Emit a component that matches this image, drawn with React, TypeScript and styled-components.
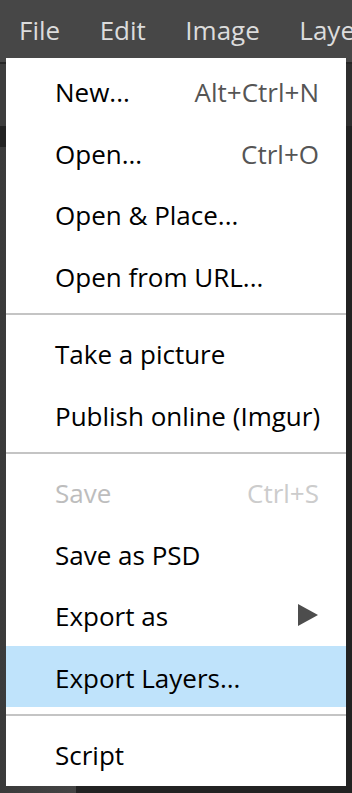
import React from "react";
import styled, { createGlobalStyle } from "styled-components";

const GlobalStyle = createGlobalStyle`
  html, body {
    margin: 0;
    padding: 0;
    background: #222222;
    overflow: hidden;
  }
  body {
    font-family: "Open Sans", "Liberation Sans", sans-serif;
  }
`;

const Screen = styled.div`
  position: relative;
  width: 352px;
  height: 793px;
  display: flex;
  flex-direction: column;
  background: #222222;
  overflow: hidden;
`;

const MenuBar = styled.div`
  height: 62px;
  display: flex;
  align-items: flex-start;
  gap: 39.5px;
  padding-left: 19px;
  background: #474747;
  flex-shrink: 0;
  overflow: hidden;
`;

const MenuBarItem = styled.div`
  font-size: 26px;
  line-height: 60px;
  color: #dcdcdc;
  white-space: nowrap;
`;

const ToolBar = styled.div`
  height: 62px;
  display: flex;
  justify-content: flex-end;
  align-items: center;
  border-top: 2px solid #262626;
  background: #3d3d3d;
  flex-shrink: 0;
`;

const ToolOptions = styled.div`
  width: 12px;
  height: 100%;
  background: #2e2e2e;
`;

const Workspace = styled.div`
  flex: 1;
  display: flex;
`;

const SidePanel = styled.div`
  width: 76px;
  margin-top: 21px;
  background: linear-gradient(90deg, #3a3a3a, #444444);
`;

const Canvas = styled.div`
  flex: 1;
  background: #222222;
`;

const Dropdown = styled.div`
  position: absolute;
  top: 58px;
  left: 6px;
  width: 340px;
  padding: 2px 0 1px;
  background: #ffffff;
  display: flex;
  flex-direction: column;
`;

const Item = styled.div<{ $active?: boolean; $disabled?: boolean }>`
  height: 61.5px;
  box-sizing: border-box;
  padding: 3px 27px 0 49px;
  display: flex;
  align-items: flex-start;
  justify-content: space-between;
  font-size: 26px;
  line-height: 58.5px;
  white-space: nowrap;
  color: ${({ $disabled }) => ($disabled ? "#bdbdbd" : "#000000")};
  background: ${({ $active }) => ($active ? "#bfe3fb" : "transparent")};
`;

const Shortcut = styled.span<{ $disabled?: boolean }>`
  color: ${({ $disabled }) => ($disabled ? "#cccccc" : "#555555")};
`;

const Arrow = styled.svg`
  align-self: center;
  margin-top: -3px;
  margin-right: 1px;
`;

const Separator = styled.div`
  height: 2px;
  margin: 7px 0;
  background: #c4c4c4;
`;

type Entry =
  | { label: string; shortcut?: string; submenu?: boolean; disabled?: boolean; active?: boolean }
  | "sep";

const entries: Entry[] = [
  { label: "New...", shortcut: "Alt+Ctrl+N" },
  { label: "Open...", shortcut: "Ctrl+O" },
  { label: "Open & Place..." },
  { label: "Open from URL..." },
  "sep",
  { label: "Take a picture" },
  { label: "Publish online (Imgur)" },
  "sep",
  { label: "Save", shortcut: "Ctrl+S", disabled: true },
  { label: "Save as PSD" },
  { label: "Export as", submenu: true },
  { label: "Export Layers...", active: true },
  "sep",
  { label: "Script" },
];

export default function App() {
  return (
    <>
      <GlobalStyle />
      <Screen>
        <MenuBar>
          {["File", "Edit", "Image", "Layer"].map((m) => (
            <MenuBarItem key={m}>{m}</MenuBarItem>
          ))}
        </MenuBar>
        <ToolBar>
          <ToolOptions />
        </ToolBar>
        <Workspace>
          <SidePanel />
          <Canvas />
        </Workspace>

        <Dropdown>
          {entries.map((e, i) =>
            e === "sep" ? (
              <Separator key={i} />
            ) : (
              <Item key={i} $active={e.active} $disabled={e.disabled}>
                <span>{e.label}</span>
                {e.shortcut && <Shortcut $disabled={e.disabled}>{e.shortcut}</Shortcut>}
                {e.submenu && (
                  <Arrow width="20" height="22" viewBox="0 0 20 22">
                    <path d="M0 0 L20 11 L0 22 Z" fill="#4d4d4d" />
                  </Arrow>
                )}
              </Item>
            )
          )}
        </Dropdown>
      </Screen>
    </>
  );
}
